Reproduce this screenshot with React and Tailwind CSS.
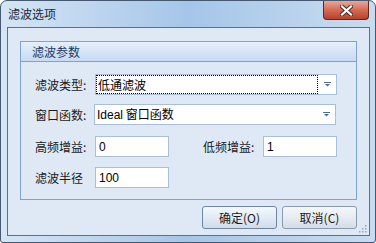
import React from 'react';

const cjk = { fontFamily: '"Noto Sans CJK SC", "Liberation Sans", sans-serif' };

const Arrow = () => (
  <svg width="7" height="5" viewBox="0 0 7 5" className="shrink-0">
    <rect x="0" y="0" width="7" height="1" fill="#4b6d9c" />
    <path d="M1 2 H6 L3.5 4.6 Z" fill="#4b6d9c" />
  </svg>
);

const Combo = ({ value, focused }) => (
  <div className="flex items-center w-[242px] h-[21px] border border-[#a7bedc] bg-white pl-[1px] pr-[5px]">
    <div className={`flex-1 h-[17px] flex items-center pl-[1px] ${focused ? 'outline-1 outline-dotted outline-black -outline-offset-0' : ''}`}>
      <span className="text-[12px] leading-none text-black">{value}</span>
    </div>
    <div className="w-[14px] flex justify-end">
      <Arrow />
    </div>
  </div>
);

const Field = ({ value }) => (
  <div className="w-[74px] h-[21px] border border-[#a7bedc] bg-white flex items-center pl-[3px]">
    <span className="text-[12px] leading-none text-black" style={{ fontFamily: '"Liberation Sans", sans-serif' }}>{value}</span>
  </div>
);

const Label = ({ children, w = 'w-[60px]' }) => (
  <span className={`${w} text-[12px] leading-none text-[#1a1a1a]`}>{children}</span>
);

const Btn = ({ children, primary }) => (
  <button
    className={`w-[75px] h-[23px] rounded-[3px] border text-[12px] leading-none text-[#1a1a1a] bg-gradient-to-b ${
      primary
        ? 'border-[#6f86a3] from-[#f4f8fc] via-[#e3ebf5] to-[#cfdcea]'
        : 'border-[#8a9bb0] from-[#f4f7fa] via-[#e6ecf3] to-[#d3dde8]'
    }`}
    style={cjk}
  >
    {children}
  </button>
);

export default function App() {
  return (
    <div
      className="w-[376px] h-[243px] overflow-hidden rounded-t-[7px] rounded-b-[3px] border border-[#45586f] bg-gradient-to-r from-[#d5e5f5] via-[#a5c6e8] to-[#c8dcf0]"
      style={cjk}
    >
      <div className="h-[26px] flex items-start justify-between">
        <span className="pl-[7px] pt-[7px] text-[12px] leading-none text-[#1c2a3c]">滤波选项</span>
        <div className="mr-[6px] w-[46px] h-[19px] rounded-b-[4px] border border-t-0 border-[#5a2a22] bg-gradient-to-b from-[#e9a797] via-[#d36a52] to-[#b9402a] flex items-center justify-center">
          <svg width="13" height="11" viewBox="0 0 13 11">
            <path d="M2 1.5 L11 9.5 M11 1.5 L2 9.5" stroke="#3b2a2a" strokeWidth="4" strokeLinecap="square" />
            <path d="M2 1.5 L11 9.5 M11 1.5 L2 9.5" stroke="#ffffff" strokeWidth="2.2" strokeLinecap="square" />
          </svg>
        </div>
      </div>

      <div className="relative ml-[6px] w-[363px] h-[209px] border border-[#5b708a] bg-[#dfe9f6]">
        <div className="ml-[12px] mt-[13px] w-[337px] h-[159px] border border-[#7fa3cf] flex flex-col">
          <div className="h-[20px] border-b border-[#7fa3cf] bg-gradient-to-b from-[#e6effb] to-[#c6dbf3] flex items-center pl-[11px]">
            <span className="text-[12px] leading-none text-[#1d3a6a]">滤波参数</span>
          </div>
          <div className="pl-[14px] flex flex-col">
            <div className="mt-[12px] flex items-center">
              <Label>滤波类型:</Label>
              <Combo value="低通滤波" focused />
            </div>
            <div className="mt-[9px] flex items-center">
              <Label w="w-[59px]">窗口函数:</Label>
              <Combo value={<><span style={{ fontFamily: '"Liberation Sans", sans-serif' }}>Ideal</span> 窗口函数</>} />
            </div>
            <div className="mt-[11px] flex items-center">
              <Label>高频增益:</Label>
              <Field value="0" />
              <span className="ml-[34px] w-[60px] text-[12px] leading-none text-[#1a1a1a]">低频增益:</span>
              <Field value="1" />
            </div>
            <div className="mt-[10px] flex items-center">
              <Label>滤波半径</Label>
              <Field value="100" />
            </div>
          </div>
        </div>
        <div className="mt-[6px] flex justify-end gap-[5px] pr-[12px]">
          <Btn primary>确定(O)</Btn>
          <Btn>取消(C)</Btn>
        </div>
        <svg className="absolute right-[2px] bottom-[2px]" width="9" height="9" viewBox="0 0 9 9">
          {[[7, 1], [4, 4], [7, 4], [1, 7], [4, 7], [7, 7]].map(([x, y], i) => (
            <rect key={i} x={x} y={y} width="1.5" height="1.5" fill="#9aa9ba" />
          ))}
        </svg>
      </div>
    </div>
  );
}
